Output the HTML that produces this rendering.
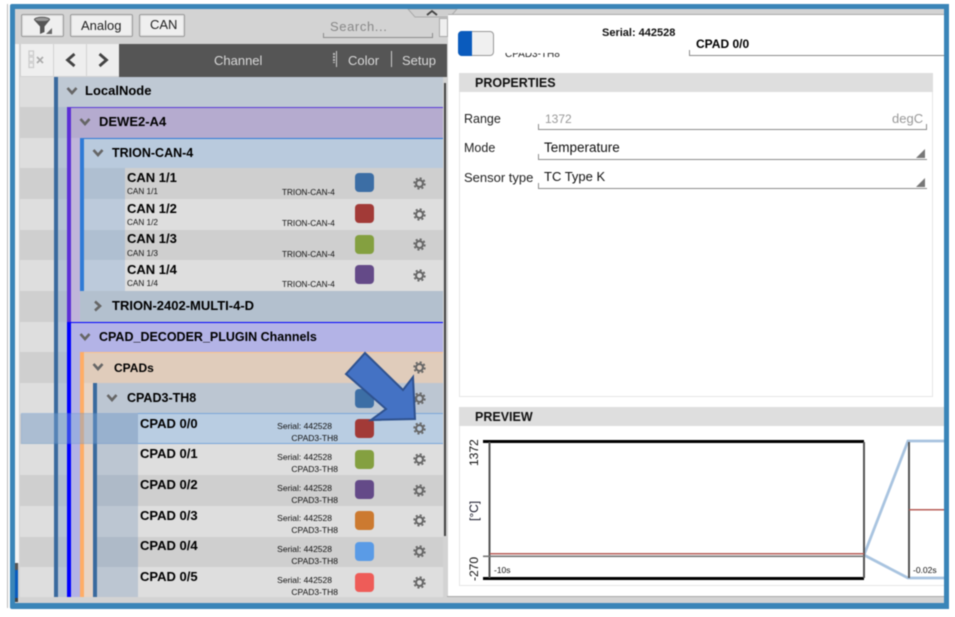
<!DOCTYPE html>
<html><head><meta charset="utf-8">
<style>
html,body{margin:0;padding:0;background:#fff}
#p{position:relative;width:955px;height:617px;overflow:hidden;background:#fff;font-family:"Liberation Sans",sans-serif;color:#111;filter:blur(.4px)}
#p div,#p svg,#p span.t{position:absolute}
.t{white-space:nowrap;line-height:14px}
.b{font-weight:bold;font-size:13px;color:#000}
.s{font-size:8.2px;line-height:10px;color:#111}
.r{font-size:8.5px;line-height:10px;color:#111;text-align:right;width:100px}
.btn{background:#efefef;border:1px solid #9a9a9a;border-radius:2px;box-sizing:border-box;box-shadow:0 0 0 1px #ddd inset}
.sw{width:19px;height:19px;border-radius:4px;left:355px}
.g{width:13px;height:13px;left:412.5px}
.ln{background:#8c8c8c}
</style></head><body>
<div id="p">
<svg width="0" height="0" style="left:0;top:0"><defs><symbol id="gear" viewBox="0 0 12 12"><circle cx="6" cy="6" r="4.9" fill="none" stroke="#666" stroke-width="1.6" stroke-dasharray="1.9 1.95"/><circle cx="6" cy="6" r="3.2" fill="none" stroke="#666" stroke-width="1.9"/></symbol><symbol id="dn" viewBox="0 0 12 12"><path d="M1.500 3L6 8L10.500 3" fill="none" stroke="#666" stroke-width="2.600"/></symbol><symbol id="rt" viewBox="0 0 12 12"><path d="M3 1.500L8 6L3 10.500" fill="none" stroke="#666" stroke-width="2.600"/></symbol></defs></svg>

<div style="left:7px;top:4px;width:1px;height:604px;background:#bbb"></div>
<div style="left:10px;top:4px;width:939px;height:605px;background:#3a85b8;border-radius:2px"></div>
<div style="left:15px;top:9px;width:929px;height:594px;background:#d3d3d3"></div>
<div style="left:15px;top:44px;width:4px;height:519px;background:#f4f4f4"></div>
<div style="left:15px;top:563px;width:3px;height:37px;background:#0a5bbd"></div>
<div style="left:15px;top:563px;width:3px;height:7px;background:#555"></div>
<div style="left:15px;top:598px;width:3px;height:4px;background:#444"></div>

<!-- toolbar -->
<div class="btn" style="left:21px;top:14px;width:43px;height:23px"></div>
<svg style="left:32px;top:16px" width="22" height="20" viewBox="0 0 22 20"><ellipse cx="10" cy="3.500" rx="7.500" ry="2.200" fill="#999" stroke="#555"/><path d="M3 5L8 10.500V18L12.500 16V10.500L17 5Z" fill="#555"/><path d="M20 12V18H14Z" fill="#666"/></svg>
<div class="btn" style="left:70px;top:14px;width:63px;height:23px"></div>
<span class="t" style="left:81px;top:19px;font-size:13px;color:#222">Analog</span>
<div class="btn" style="left:139px;top:14px;width:46px;height:23px"></div>
<span class="t" style="left:150px;top:18px;font-size:13px;color:#222">CAN</span>
<span class="t" style="left:330px;top:20px;font-size:13px;color:#888;letter-spacing:.6px">Search...</span>
<div class="ln" style="left:323px;top:37px;width:110px;height:1px"></div>
<div class="ln" style="left:323px;top:33px;width:1px;height:4px"></div>
<div class="ln" style="left:432px;top:33px;width:1px;height:4px"></div>
<div style="left:439px;top:18px;width:9px;height:19px;background:#efefef;border:1px solid #aaa;box-sizing:border-box"></div>
<svg style="left:406px;top:9px" width="52" height="10" viewBox="0 0 52 10"><path d="M2 0L9 8H44L51 0Z" fill="#cfcfcf" stroke="#aaa"/><path d="M21 6L26 2L31 6" fill="none" stroke="#444" stroke-width="1.800"/></svg>

<!-- header row -->
<div style="left:21px;top:44px;width:32px;height:32px;background:#efefef"></div>
<svg style="left:27px;top:49px" width="22" height="22" viewBox="0 0 22 22"><rect x="2" y="2" width="4.500" height="4.500" fill="none" stroke="#ccc" stroke-width="1.300"/><rect x="2" y="8" width="4.500" height="4.500" fill="none" stroke="#ccc" stroke-width="1.300"/><rect x="2" y="14" width="4.500" height="4.500" fill="none" stroke="#ccc" stroke-width="1.300"/><path d="M10 8L16 14M16 8L10 14" stroke="#aaa" stroke-width="1.600"/></svg>
<div style="left:54px;top:44px;width:32px;height:32px;background:#eee"></div>
<svg style="left:64px;top:52px" width="14" height="16" viewBox="0 0 14 16"><path d="M10.500 2L3.500 8L10.500 14" fill="none" stroke="#444" stroke-width="2.800"/></svg>
<div style="left:87px;top:44px;width:32px;height:32px;background:#eee"></div>
<svg style="left:96px;top:52px" width="14" height="16" viewBox="0 0 14 16"><path d="M3.500 2L10.500 8L3.500 14" fill="none" stroke="#444" stroke-width="2.800"/></svg>
<div style="left:119px;top:44px;width:328px;height:33px;background:#555"></div>
<span class="t" style="left:214px;top:54px;font-size:13px;color:#d8d8d8">Channel</span>
<span class="t" style="left:348px;top:54px;font-size:13px;color:#d8d8d8">Color</span>
<span class="t" style="left:402px;top:54px;font-size:13px;color:#d8d8d8">Setup</span>
<div style="left:336px;top:51px;width:1px;height:16px;background:#ccc"></div>
<div style="left:333px;top:53px;width:2px;height:10px;background:repeating-linear-gradient(#bbb 0 2px,#555 2px 3px)"></div>
<div style="left:391px;top:51px;width:1px;height:16px;background:#ccc"></div>

<!-- left alternating rows -->
<div style="left:20px;top:77px;width:423px;height:30px;background:#dedede"></div>
<div style="left:20px;top:107px;width:423px;height:31px;background:#cfcfcf"></div>
<div style="left:20px;top:138px;width:423px;height:30px;background:#dedede"></div>
<div style="left:20px;top:168px;width:423px;height:31px;background:#cfcfcf"></div>
<div style="left:20px;top:199px;width:423px;height:31px;background:#dedede"></div>
<div style="left:20px;top:230px;width:423px;height:30px;background:#cfcfcf"></div>
<div style="left:20px;top:260px;width:423px;height:31px;background:#dedede"></div>
<div style="left:20px;top:291px;width:423px;height:31px;background:#cfcfcf"></div>
<div style="left:20px;top:322px;width:423px;height:30px;background:#dedede"></div>
<div style="left:20px;top:352px;width:423px;height:31px;background:#cfcfcf"></div>
<div style="left:20px;top:383px;width:423px;height:31px;background:#dedede"></div>
<div style="left:20px;top:414px;width:423px;height:30px;background:#cfcfcf"></div>
<div style="left:20px;top:444px;width:423px;height:31px;background:#dedede"></div>
<div style="left:20px;top:475px;width:423px;height:31px;background:#cfcfcf"></div>
<div style="left:20px;top:506px;width:423px;height:31px;background:#dedede"></div>
<div style="left:20px;top:537px;width:423px;height:30px;background:#cfcfcf"></div>
<div style="left:20px;top:567px;width:423px;height:30px;background:#dedede"></div>

<!-- tints -->
<div style="left:58px;top:77px;width:385px;height:30px;background:#bfc9d4"></div>
<div style="left:58px;top:107px;width:9px;height:490px;background:rgba(150,175,205,.55)"></div>
<div style="left:71px;top:107px;width:372px;height:31px;background:#b5abcf;border-top:1px solid #5b3bd6;box-sizing:border-box"></div>
<div style="left:71px;top:138px;width:9px;height:184px;background:#c0b5da"></div>
<div style="left:84px;top:138px;width:359px;height:30px;background:#b9cadd;border-top:1px solid #2f7bd6;box-sizing:border-box"></div>
<div style="left:84px;top:168px;width:41px;height:31px;background:#afbfd1"></div>
<div style="left:84px;top:199px;width:41px;height:31px;background:#bccadb"></div>
<div style="left:84px;top:230px;width:41px;height:30px;background:#afbfd1"></div>
<div style="left:84px;top:260px;width:41px;height:31px;background:#bccadb"></div>
<div style="left:80px;top:291px;width:363px;height:31px;background:#b3c0ce"></div>
<div style="left:71px;top:322px;width:372px;height:30px;background:#b3b3e6;border-top:1px solid #0000ff;box-sizing:border-box"></div>
<div style="left:71px;top:352px;width:9px;height:245px;background:#b3b3e6"></div>
<div style="left:84px;top:352px;width:359px;height:31px;background:#e0ccbb;border-top:1px solid #ffc48c;box-sizing:border-box"></div>
<div style="left:84px;top:383px;width:9px;height:214px;background:#e8d5c6"></div>
<div style="left:97px;top:383px;width:346px;height:31px;background:#bcc6d2"></div>
<div style="left:97px;top:414px;width:41px;height:30px;background:#aebac8"></div>
<div style="left:97px;top:444px;width:41px;height:31px;background:#bcc6d2"></div>
<div style="left:97px;top:475px;width:41px;height:31px;background:#aebac8"></div>
<div style="left:97px;top:506px;width:41px;height:31px;background:#bcc6d2"></div>
<div style="left:97px;top:537px;width:41px;height:30px;background:#aebac8"></div>
<div style="left:97px;top:567px;width:41px;height:30px;background:#bcc6d2"></div>

<!-- stripes -->
<div style="left:54px;top:77px;width:4px;height:520px;background:#3a6a9e"></div>
<div style="left:67px;top:107px;width:4px;height:215px;background:#5b2fd6"></div>
<div style="left:80px;top:138px;width:4px;height:153px;background:#2f7bd6"></div>
<div style="left:67px;top:322px;width:4px;height:275px;background:#0000ff"></div>
<div style="left:80px;top:352px;width:4px;height:245px;background:#ffad66"></div>
<div style="left:93px;top:383px;width:4px;height:214px;background:#3a6a9e"></div>

<!-- selection -->
<div style="left:21px;top:413px;width:422px;height:31px;box-sizing:border-box;background:#7aa6d8;opacity:.42;border:1px solid #5f94d0"></div>
<div style="left:138px;top:414px;width:305px;height:30px;background:#b9cde2"></div>
<div style="left:138px;top:443px;width:305px;height:1px;background:#7ba7d8"></div>
<div style="left:138px;top:413px;width:305px;height:1px;background:#7ba7d8"></div>

<!-- group labels -->
<svg style="left:66px;top:85px" width="12" height="12"><use href="#dn"/></svg>
<span class="t b" style="left:85px;top:84px">LocalNode</span>
<svg style="left:79px;top:116px" width="12" height="12"><use href="#dn"/></svg>
<span class="t b" style="left:99px;top:115px">DEWE2-A4</span>
<svg style="left:92px;top:147px" width="12" height="12"><use href="#dn"/></svg>
<span class="t b" style="left:112px;top:146px;font-size:12.500px">TRION-CAN-4</span>
<svg style="left:92px;top:300px" width="12" height="12"><use href="#rt"/></svg>
<span class="t b" style="left:112px;top:299px">TRION-2402-MULTI-4-D</span>
<svg style="left:79px;top:331px" width="12" height="12"><use href="#dn"/></svg>
<span class="t b" style="left:99px;top:330px;font-size:12.500px">CPAD_DECODER_PLUGIN Channels</span>
<svg style="left:92px;top:361px" width="12" height="12"><use href="#dn"/></svg>
<span class="t b" style="left:114px;top:361px;font-size:12px">CPADs</span>
<svg style="left:106px;top:392px" width="12" height="12"><use href="#dn"/></svg>
<span class="t b" style="left:127px;top:391px;font-size:12.500px">CPAD3-TH8</span>

<!-- CAN rows -->
<span class="t b" style="left:127px;top:171px">CAN 1/1</span><span class="t s" style="left:127px;top:187px">CAN 1/1</span><span class="t s" style="left:282px;top:188px">TRION-CAN-4</span>
<div class="sw" style="top:173px;background:#3c6ea5"></div><svg class="g" style="top:177px"><use href="#gear"/></svg>
<span class="t b" style="left:127px;top:202px">CAN 1/2</span><span class="t s" style="left:127px;top:218px">CAN 1/2</span><span class="t s" style="left:282px;top:219px">TRION-CAN-4</span>
<div class="sw" style="top:204px;background:#a23a37"></div><svg class="g" style="top:208px"><use href="#gear"/></svg>
<span class="t b" style="left:127px;top:232px">CAN 1/3</span><span class="t s" style="left:127px;top:249px">CAN 1/3</span><span class="t s" style="left:282px;top:250px">TRION-CAN-4</span>
<div class="sw" style="top:235px;background:#84a040"></div><svg class="g" style="top:238px"><use href="#gear"/></svg>
<span class="t b" style="left:127px;top:263px">CAN 1/4</span><span class="t s" style="left:127px;top:279px">CAN 1/4</span><span class="t s" style="left:282px;top:280px">TRION-CAN-4</span>
<div class="sw" style="top:265px;background:#644a88"></div><svg class="g" style="top:269px"><use href="#gear"/></svg>

<!-- CPADs rows -->
<svg class="g" style="top:361px"><use href="#gear"/></svg>
<div class="sw" style="top:389px;background:#3c6ea5"></div><svg class="g" style="top:392px"><use href="#gear"/></svg>

<span class="t b" style="left:140px;top:417px">CPAD 0/0</span><span class="t r" style="left:232px;top:421px">Serial: 442528</span><span class="t r" style="left:238px;top:433px">CPAD3-TH8</span>
<div class="sw" style="top:419px;background:#a23a37"></div><svg class="g" style="top:422px"><use href="#gear"/></svg>
<span class="t b" style="left:140px;top:447px">CPAD 0/1</span><span class="t r" style="left:232px;top:452px">Serial: 442528</span><span class="t r" style="left:238px;top:464px">CPAD3-TH8</span>
<div class="sw" style="top:450px;background:#84a040"></div><svg class="g" style="top:453px"><use href="#gear"/></svg>
<span class="t b" style="left:140px;top:478px">CPAD 0/2</span><span class="t r" style="left:232px;top:483px">Serial: 442528</span><span class="t r" style="left:238px;top:495px">CPAD3-TH8</span>
<div class="sw" style="top:480px;background:#644a88"></div><svg class="g" style="top:484px"><use href="#gear"/></svg>
<span class="t b" style="left:140px;top:509px">CPAD 0/3</span><span class="t r" style="left:232px;top:513px">Serial: 442528</span><span class="t r" style="left:238px;top:525px">CPAD3-TH8</span>
<div class="sw" style="top:511px;background:#cc7a30"></div><svg class="g" style="top:514px"><use href="#gear"/></svg>
<span class="t b" style="left:140px;top:539px">CPAD 0/4</span><span class="t r" style="left:232px;top:544px">Serial: 442528</span><span class="t r" style="left:238px;top:556px">CPAD3-TH8</span>
<div class="sw" style="top:542px;background:#5a9be6"></div><svg class="g" style="top:545px"><use href="#gear"/></svg>
<span class="t b" style="left:140px;top:570px">CPAD 0/5</span><span class="t r" style="left:232px;top:575px">Serial: 442528</span><span class="t r" style="left:238px;top:587px">CPAD3-TH8</span>
<div class="sw" style="top:573px;background:#ee5c58"></div><svg class="g" style="top:576px"><use href="#gear"/></svg>

<!-- arrow -->
<svg style="left:340px;top:348px" width="82" height="78" viewBox="340 348 82 78"><path d="M365 353L403 390L413 377L415 419L371 420L386 409L346 374Z" fill="#4472c4" stroke="#2f528f" stroke-width="2"/></svg>

<!-- scrollbar -->
<div style="left:444px;top:83px;width:2px;height:453px;background:#444"></div>

<!-- right panel -->
<div style="left:448px;top:14px;width:496px;height:582px;background:#fff;border-top:1px solid #aaa;box-sizing:border-box"></div>
<div style="left:447px;top:596px;width:497px;height:1px;background:#aaa"></div>
<div style="left:458px;top:31px;width:36px;height:25px;background:#f0f0f0;border:1px solid #999;border-radius:4px;box-sizing:border-box"></div>
<div style="left:458px;top:31px;width:14px;height:25px;background:#0a5bbd;border-radius:4px 0 0 4px"></div>
<div style="left:505px;top:50px;width:60px;height:11px;overflow:hidden"><span class="t" style="left:0;top:-1px;font-size:10px;line-height:11px;color:#222">CPAD3-TH8</span></div>
<div style="left:505px;top:48px;width:60px;height:5px;background:#fff"></div>
<span class="t" style="left:602px;top:26px;font-size:11px;font-weight:bold;color:#111">Serial: 442528</span>
<span class="t" style="left:696px;top:37px;font-size:12px;font-weight:bold;color:#000">CPAD 0/0</span>
<div class="ln" style="left:689px;top:55px;width:255px;height:1px"></div>
<div class="ln" style="left:689px;top:50px;width:1px;height:5px"></div>

<div style="left:459px;top:73px;width:474px;height:324px;box-sizing:border-box;border:1px solid #e6e6e6"></div>
<div style="left:459px;top:73px;width:474px;height:19px;background:#dedede"></div>
<span class="t" style="left:475px;top:76px;font-size:12.500px;font-weight:bold;color:#111">PROPERTIES</span>

<span class="t" style="left:464px;top:112px;font-size:12.500px;color:#222">Range</span>
<span class="t" style="left:545px;top:112px;font-size:12px;color:#999">1372</span>
<span class="t" style="left:892px;top:112px;font-size:13px;color:#999">degC</span>
<div class="ln" style="left:538px;top:129px;width:389px;height:1px"></div>
<div class="ln" style="left:538px;top:124px;width:1px;height:5px"></div>
<div class="ln" style="left:926px;top:124px;width:1px;height:5px"></div>

<span class="t" style="left:464px;top:141px;font-size:12.500px;color:#222">Mode</span>
<span class="t" style="left:544px;top:141px;font-size:13.500px;color:#111">Temperature</span>
<div class="ln" style="left:538px;top:159px;width:389px;height:1px"></div>
<div class="ln" style="left:538px;top:154px;width:1px;height:5px"></div>
<svg style="left:916px;top:149px" width="11" height="10"><path d="M0 9L9 0V9Z" fill="#777"/></svg>

<span class="t" style="left:464px;top:171px;font-size:13px;color:#222">Sensor type</span>
<span class="t" style="left:544px;top:170px;font-size:13px;color:#111">TC Type K</span>
<div class="ln" style="left:538px;top:188px;width:389px;height:1px"></div>
<div class="ln" style="left:538px;top:183px;width:1px;height:5px"></div>
<svg style="left:916px;top:178px" width="11" height="10"><path d="M0 9L9 0V9Z" fill="#777"/></svg>

<div style="left:459px;top:407px;width:486px;height:179px;box-sizing:border-box;border:1px solid #e6e6e6"></div>
<div style="left:459px;top:407px;width:485px;height:19px;background:#dedede"></div>
<span class="t" style="left:475px;top:410px;font-size:12.500px;font-weight:bold;color:#111">PREVIEW</span>

<svg style="left:459px;top:430px" width="485" height="160" viewBox="459 430 485 160">
<path d="M864 555L908 441H944M864 555L908 578H944" fill="none" stroke="#a9c4e0" stroke-width="2.800"/>
<rect x="483" y="440" width="381" height="3" fill="#000"/>
<rect x="483" y="577" width="381" height="3" fill="#000"/>
<rect x="488.500" y="442" width="2" height="136" fill="#555"/>
<rect x="863" y="442" width="2" height="136" fill="#555"/>
<rect x="490" y="553" width="374" height="1.500" fill="#b85f5a"/>
<rect x="483" y="555.500" width="381" height="1.600" fill="#777"/>
<rect x="908" y="442" width="2" height="136" fill="#555"/>
<rect x="909" y="509" width="35" height="1.500" fill="#b85f5a"/>
<text x="-466" y="478" transform="rotate(-90 0 0)" font-family="Liberation Sans" font-size="12" fill="#111">1372</text>
<text x="-521" y="478" transform="rotate(-90 0 0)" font-family="Liberation Sans" font-size="12" fill="#112">[°C]</text>
<text x="-581" y="478" transform="rotate(-90 0 0)" font-family="Liberation Sans" font-size="12" fill="#111">-270</text>
<text x="494" y="573" font-family="Liberation Sans" font-size="8.500" fill="#111">-10s</text>
<text x="913" y="573" font-family="Liberation Sans" font-size="8.500" fill="#111">-0.02s</text>
</svg>
<div style="left:944px;top:4px;width:5px;height:605px;background:#3a85b8"></div>
</div>
</body></html>
